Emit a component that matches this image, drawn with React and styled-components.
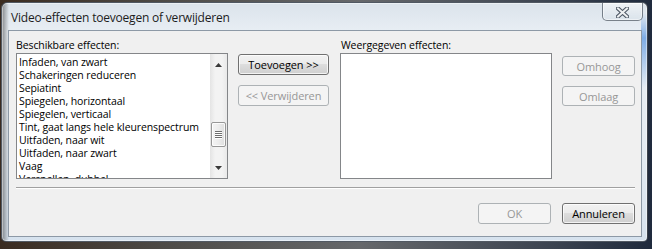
import React from 'react'
import styled, { createGlobalStyle } from 'styled-components';

const available = [
  'Infaden, van zwart',
  'Schakeringen reduceren',
  'Sepiatint',
  'Spiegelen, horizontaal',
  'Spiegelen, verticaal',
  'Tint, gaat langs hele kleurenspectrum',
  'Uitfaden, naar wit',
  'Uitfaden, naar zwart',
  'Vaag',
  'Versnellen, dubbel',
];

const App = () => {
  return (
    <>
      <GlobalStyle />
      <Window>
        <TitleBar>
          <Title>Video-effecten toevoegen of verwijderen</Title>
          <CloseButton>
            <svg width="13" height="11" viewBox="0 0 13 11">
              <path d="M2 1.5 L11 9.5 M11 1.5 L2 9.5" stroke="#4f5966" strokeWidth="4.2" strokeLinecap="square" fill="none" />
              <path d="M2 1.5 L11 9.5 M11 1.5 L2 9.5" stroke="#eef0f2" strokeWidth="2" strokeLinecap="square" fill="none" />
            </svg>
          </CloseButton>
        </TitleBar>
        <Client>
          <TopRow>
            <ListPanel>
              <Label>Beschikbare effecten:</Label>
              <ListBox>
                <Items>
                  {available.map((item, index) => (
                    <Item key={index}>{item}</Item>
                  ))}
                </Items>
                <ScrollBar>
                  <Arrow $dir="up">
                    <svg width="7" height="4" viewBox="0 0 7 4"><path d="M0 4 L3.5 0 L7 4 Z" fill="#3a3a3a" /></svg>
                  </Arrow>
                  <Track>
                    <Thumb $offset={51}>
                      <Grip />
                    </Thumb>
                  </Track>
                  <Arrow $dir="down">
                    <svg width="7" height="4" viewBox="0 0 7 4"><path d="M0 0 L7 0 L3.5 4 Z" fill="#3a3a3a" /></svg>
                  </Arrow>
                </ScrollBar>
              </ListBox>
            </ListPanel>

            <ButtonColumn $top={17} $gap={10}>
              <Button>Toevoegen &gt;&gt;</Button>
              <Button disabled>&lt;&lt; Verwijderen</Button>
            </ButtonColumn>

            <ListPanel $gap={11}>
              <Label $indent={1}>Weergegeven effecten:</Label>
              <ListBox />
            </ListPanel>

            <ButtonColumn $top={19} $gap={10} $width={73}>
              <Button disabled $h={20}>Omhoog</Button>
              <Button disabled $h={20}>Omlaag</Button>
            </ButtonColumn>
          </TopRow>

          <Separator />

          <Footer>
            <Button disabled $w={73}>OK</Button>
            <Button $w={73}>Annuleren</Button>
          </Footer>
        </Client>
      </Window>
    </>
  )
}

const GlobalStyle = createGlobalStyle`
  html, body {
    margin: 0;
    padding: 0;
  }
  body {
    width: 652px;
    height: 249px;
    overflow: hidden;
    background: linear-gradient(90deg, #3a2b20 0%, #4d4a46 25%, #66686b 55%, #3b4350 85%, #1f2a3d 100%);
    font-family: "Open Sans", "Noto Sans", sans-serif;
  }
`;

const Window = styled.div`
  margin: 2px 0 0 1px;
  width: 647px;
  height: 240px;
  box-sizing: border-box;
  border: 1px solid rgba(35, 42, 52, 0.75);
  border-radius: 6px 6px 5px 5px;
  display: flex;
  flex-direction: column;
  background:
    linear-gradient(180deg, rgba(120, 170, 230, 0) 10px, rgba(90, 150, 225, 0.75) 35px, rgba(120, 170, 230, 0) 85px) right top / 6px 100% no-repeat,
    linear-gradient(90deg, rgba(60, 60, 60, 0.55) 0, rgba(60, 60, 60, 0) 7px),
    linear-gradient(180deg, #dbe3eb 0%, #e8eef4 12%, #e4ebf2 60%, #d6e2ee 100%);
  box-shadow: inset 0 0 0 1px rgba(255, 255, 255, 0.45);
`;

const TitleBar = styled.div`
  height: 27px;
  display: flex;
  align-items: flex-start;
  padding: 0 4px 0 9px;
`;

const Title = styled.span`
  flex: 1;
  font-size: 12px;
  letter-spacing: -0.2px;
  line-height: 26px;
  padding-top: 2px;
  color: #1c1c1c;
  white-space: nowrap;
`;

const CloseButton = styled.div`
  width: 41px;
  height: 18px;
  box-sizing: border-box;
  border: 1px solid rgba(70, 80, 92, 0.7);
  border-top: none;
  border-radius: 0 0 5px 5px;
  background: linear-gradient(180deg, rgba(255, 255, 255, 0.55), rgba(210, 220, 230, 0.45));
  box-shadow: inset 0 0 0 1px rgba(255, 255, 255, 0.5);
  display: flex;
  align-items: center;
  justify-content: center;
  padding-top: 1px;
`;

const Client = styled.div`
  flex: 1;
  margin: 0 5px 4px 6px;
  box-sizing: border-box;
  border: 1px solid #8d99a6;
  background: #f0f0f0;
  padding: 6px 6px 0 7px;
  display: flex;
  flex-direction: column;
`;

const TopRow = styled.div`
  display: flex;
  align-items: flex-start;
`;

const ListPanel = styled.div`
  width: 212px;
  margin-left: ${({ $gap }) => ($gap ? `${$gap}px` : '0')};
  display: flex;
  flex-direction: column;
`;

const Label = styled.div`
  height: 16px;
  line-height: 16px;
  font-size: 10.5px;
  letter-spacing: -0.1px;
  color: #000;
  padding-left: ${({ $indent }) => ($indent ? `${$indent}px` : '0')};
  white-space: nowrap;
`;

const ListBox = styled.div`
  height: 126px;
  box-sizing: border-box;
  border: 1px solid #848689;
  background: #fff;
  display: flex;
  overflow: hidden;
`;

const Items = styled.ul`
  flex: 1;
  margin: 0;
  padding: 2px 0 0 2px;
  list-style: none;
  overflow: hidden;
`;

const Item = styled.li`
  height: 13px;
  line-height: 13px;
  font-size: 10.5px;
  letter-spacing: -0.1px;
  color: #000;
  white-space: nowrap;
`;

const ScrollBar = styled.div`
  width: 17px;
  display: flex;
  flex-direction: column;
  background: linear-gradient(90deg, #e4e4e4 0%, #f3f3f3 30%, #f3f3f3 70%, #e9e9e9 100%);
`;

const Arrow = styled.div`
  height: 17px;
  box-sizing: border-box;
  display: flex;
  align-items: center;
  justify-content: center;
  padding: ${({ $dir }) => ($dir === 'up' ? '4px 0 0' : '0 0 4px')};
`;

const Track = styled.div`
  flex: 1;
  display: flex;
  flex-direction: column;
  align-items: center;
`;

const Thumb = styled.div`
  margin-top: ${({ $offset }) => $offset}px;
  width: 15px;
  height: 25px;
  box-sizing: border-box;
  border: 1px solid #979797;
  border-radius: 2px;
  background: linear-gradient(90deg, #f4f4f4 0%, #ececec 50%, #dedede 100%);
  box-shadow: inset 0 0 0 1px rgba(255, 255, 255, 0.8);
  display: flex;
  align-items: center;
  justify-content: center;
`;

const Grip = styled.div`
  width: 7px;
  height: 8px;
  background: repeating-linear-gradient(180deg, #6e6e6e 0 1px, #ffffff 1px 2px);
`;

const ButtonColumn = styled.div`
  width: ${({ $width }) => ($width ? $width : 91)}px;
  margin-left: 10px;
  padding-top: ${({ $top }) => $top}px;
  display: flex;
  flex-direction: column;
  gap: ${({ $gap }) => $gap}px;
`;

const Button = styled.button`
  width: ${({ $w }) => ($w ? `${$w}px` : '100%')};
  height: ${({ $h }) => ($h ? $h : 21)}px;
  box-sizing: border-box;
  padding: 0;
  font-family: "Open Sans", "Noto Sans", sans-serif;
  font-size: 11px;
  letter-spacing: -0.1px;
  color: #000;
  border: 1px solid #707070;
  border-radius: 3px;
  background: linear-gradient(180deg, #f2f2f2 0%, #ebebeb 49%, #dddddd 50%, #cfcfcf 100%);
  box-shadow: inset 0 0 0 1px rgba(255, 255, 255, 0.75);

  &:disabled {
    color: #979797;
    border-color: #adb2b5;
    background: #f4f4f4;
    box-shadow: none;
  }
`;

const Separator = styled.div`
  margin-top: 8px;
  height: 0;
  border-top: 1px solid #a0a0a0;
  border-bottom: 1px solid #ffffff;
`;

const Footer = styled.div`
  margin-top: 14px;
  display: flex;
  justify-content: flex-end;
  gap: 11px;
`;

export default App
